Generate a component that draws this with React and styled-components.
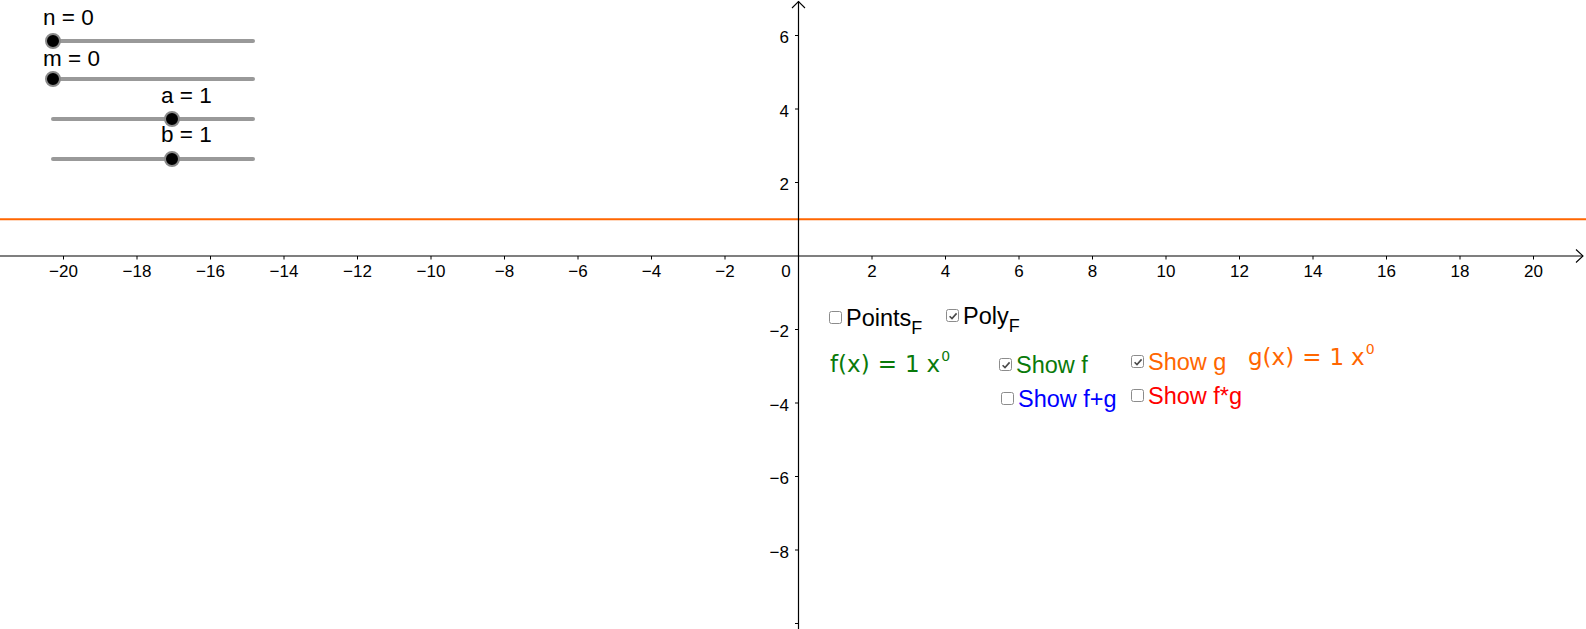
import React from "react";
import styled, { createGlobalStyle } from "styled-components";

const GlobalStyle = createGlobalStyle`
  html, body {
    margin: 0;
    padding: 0;
    background: #fff;
  }
  body {
    font-family: "Liberation Sans", Arial, sans-serif;
  }
`;

// graph view constants (screen px)
const W = 1586;
const H = 629;
const OX = 798.5;
const OY = 256;
const UNIT = 36.75;

const sx = (x) => OX + x * UNIT;
const sy = (y) => OY - y * UNIT;
const minus = (v) => (v < 0 ? "\u2212" + Math.abs(v) : String(v));

const Canvas = styled.div`
  position: relative;
  width: ${W}px;
  height: ${H}px;
  overflow: hidden;
  background: #fff;
`;

const GraphSvg = styled.svg`
  display: block;
  position: absolute;
  inset: 0;

  text {
    font-family: "Liberation Sans", Arial, sans-serif;
    font-size: 17px;
    fill: #000;
  }
`;

const SliderBox = styled.div`
  position: absolute;
  left: 43px;
  top: ${(p) => p.$top}px;
  display: flex;
  flex-direction: column;
`;

const SliderLabel = styled.div`
  font-size: 22.5px;
  line-height: 20px;
  color: #000;
  padding-left: ${(p) => p.$indent}px;
  white-space: pre;
`;

const Track = styled.div`
  position: relative;
  margin-left: 8px;
  margin-top: ${(p) => p.$gap}px;
  width: 204px;
  height: 4px;
  border-radius: 2px;
  background: #999;
`;

const Thumb = styled.div`
  position: absolute;
  top: 50%;
  width: 16px;
  height: 16px;
  box-sizing: border-box;
  border-radius: 50%;
  background: #000;
  border: 2.5px solid #8a8a8a;
  transform: translate(-50%, -50%);
`;

const CheckRow = styled.div`
  position: absolute;
  left: ${(p) => p.$x}px;
  top: ${(p) => p.$y - 4.5}px;
  display: flex;
  align-items: center;
  gap: 4px;
  font-size: 23.5px;
  line-height: 22px;
  color: ${(p) => p.$color};
  white-space: pre;
`;

const Box = styled.span`
  display: inline-flex;
  align-items: center;
  justify-content: center;
  width: 13px;
  height: 13px;
  box-sizing: border-box;
  border: 1.5px solid #8c8c8c;
  border-radius: 2.5px;
  background: #fff;

  svg {
    display: block;
  }
`;

const Sub = styled.sub`
  font-size: 18px;
  line-height: 0;
  vertical-align: -8px;
`;

const MathLabel = styled.div`
  position: absolute;
  left: ${(p) => p.$x}px;
  top: ${(p) => p.$y - 19.5}px;
  font-family: "DejaVu Sans", sans-serif;
  font-size: 23px;
  line-height: 23px;
  color: ${(p) => p.$color};
  white-space: pre;

  .rel {
    margin: 0 8px;
  }
  .coef {
    margin-right: 7px;
  }
  sup {
    font-size: 14px;
    line-height: 0;
    vertical-align: 11px;
    margin-left: 1px;
  }
`;

const sliders = [
  { name: "n", value: 0, top: 8, indent: 0, gap: 11, pos: 2 },
  { name: "m", value: 0, top: 49, indent: 0, gap: 8, pos: 2 },
  { name: "a", value: 1, top: 86, indent: 118, gap: 11, pos: 121 },
  { name: "b", value: 1, top: 125, indent: 118, gap: 12, pos: 121 },
];

const checks = [
  { x: 829, y: 311, label: "Points", sub: "F", color: "#000", on: false },
  { x: 946, y: 309, label: "Poly", sub: "F", color: "#000", on: true },
  { x: 999, y: 358, label: "Show f", color: "#0a7a0a", on: true },
  { x: 1001, y: 392, label: "Show f+g", color: "#0000ff", on: false },
  { x: 1131, y: 355, label: "Show g", color: "#ff6600", on: true },
  { x: 1131, y: 389, label: "Show f*g", color: "#ff0000", on: false },
];

const CheckMark = () => (
  <svg width="10" height="10" viewBox="0 0 10 10">
    <path d="M1.6 5.2 L4 7.6 L8.6 2.4" fill="none" stroke="#4a4a4a" strokeWidth="1.6" />
  </svg>
);

const Axes = () => {
  const xs = [];
  for (let v = -20; v <= 20; v += 2) if (v !== 0) xs.push(v);
  const ys = [];
  for (let v = 6; v >= -10; v -= 2) if (v !== 0) ys.push(v);

  return (
    <GraphSvg width={W} height={H} viewBox={`0 0 ${W} ${H}`}>
      <line x1="0" y1={sy(1)} x2={W} y2={sy(1)} stroke="#ff6600" strokeWidth="2" />

      <line x1="0" y1={OY} x2={1583} y2={OY} stroke="#000" strokeWidth="1.2" />
      <polyline points={`1576,249.5 1583,${OY} 1576,262.5`} fill="none" stroke="#000" strokeWidth="1.1" />
      <line x1={OX} y1={H} x2={OX} y2="1" stroke="#000" strokeWidth="1.2" />
      <polyline points={`792,8 ${OX},1.5 805,8`} fill="none" stroke="#000" strokeWidth="1.1" />

      {xs.map((v) => (
        <g key={"x" + v}>
          <line x1={sx(v)} y1={OY} x2={sx(v)} y2={OY + 3.5} stroke="#000" strokeWidth="1" />
          <text x={sx(v)} y="277" textAnchor="middle">
            {minus(v)}
          </text>
        </g>
      ))}
      <text x="786" y="277" textAnchor="middle">
        0
      </text>

      {ys.map((v) => (
        <g key={"y" + v}>
          <line x1={OX - 3.5} y1={sy(v)} x2={OX} y2={sy(v)} stroke="#000" strokeWidth="1" />
          {v > -10 && (
            <text x="789" y={sy(v) + 7.5} textAnchor="end">
              {minus(v)}
            </text>
          )}
        </g>
      ))}
    </GraphSvg>
  );
};

export default function App() {
  return (
    <>
      <GlobalStyle />
      <Canvas>
        <Axes />

        {sliders.map((s) => (
          <SliderBox key={s.name} $top={s.top}>
            <SliderLabel $indent={s.indent}>{`${s.name} = ${s.value}`}</SliderLabel>
            <Track $gap={s.gap}>
              <Thumb style={{ left: s.pos }} />
            </Track>
          </SliderBox>
        ))}

        {checks.map((c) => (
          <CheckRow key={c.label} $x={c.x} $y={c.y} $color={c.color}>
            <Box>{c.on && <CheckMark />}</Box>
            <span>
              {c.label}
              {c.sub && <Sub>{c.sub}</Sub>}
            </span>
          </CheckRow>
        ))}

        <MathLabel $x={830} $y={372} $color="#0a7a0a">
          <span>f(x)</span>
          <span className="rel">=</span>
          <span className="coef">1</span>
          <span>x</span>
          <sup>0</sup>
        </MathLabel>

        <MathLabel $x={1248} $y={365} $color="#ff6600">
          <span>g(x)</span>
          <span className="rel">=</span>
          <span className="coef">1</span>
          <span>x</span>
          <sup>0</sup>
        </MathLabel>
      </Canvas>
    </>
  );
}
